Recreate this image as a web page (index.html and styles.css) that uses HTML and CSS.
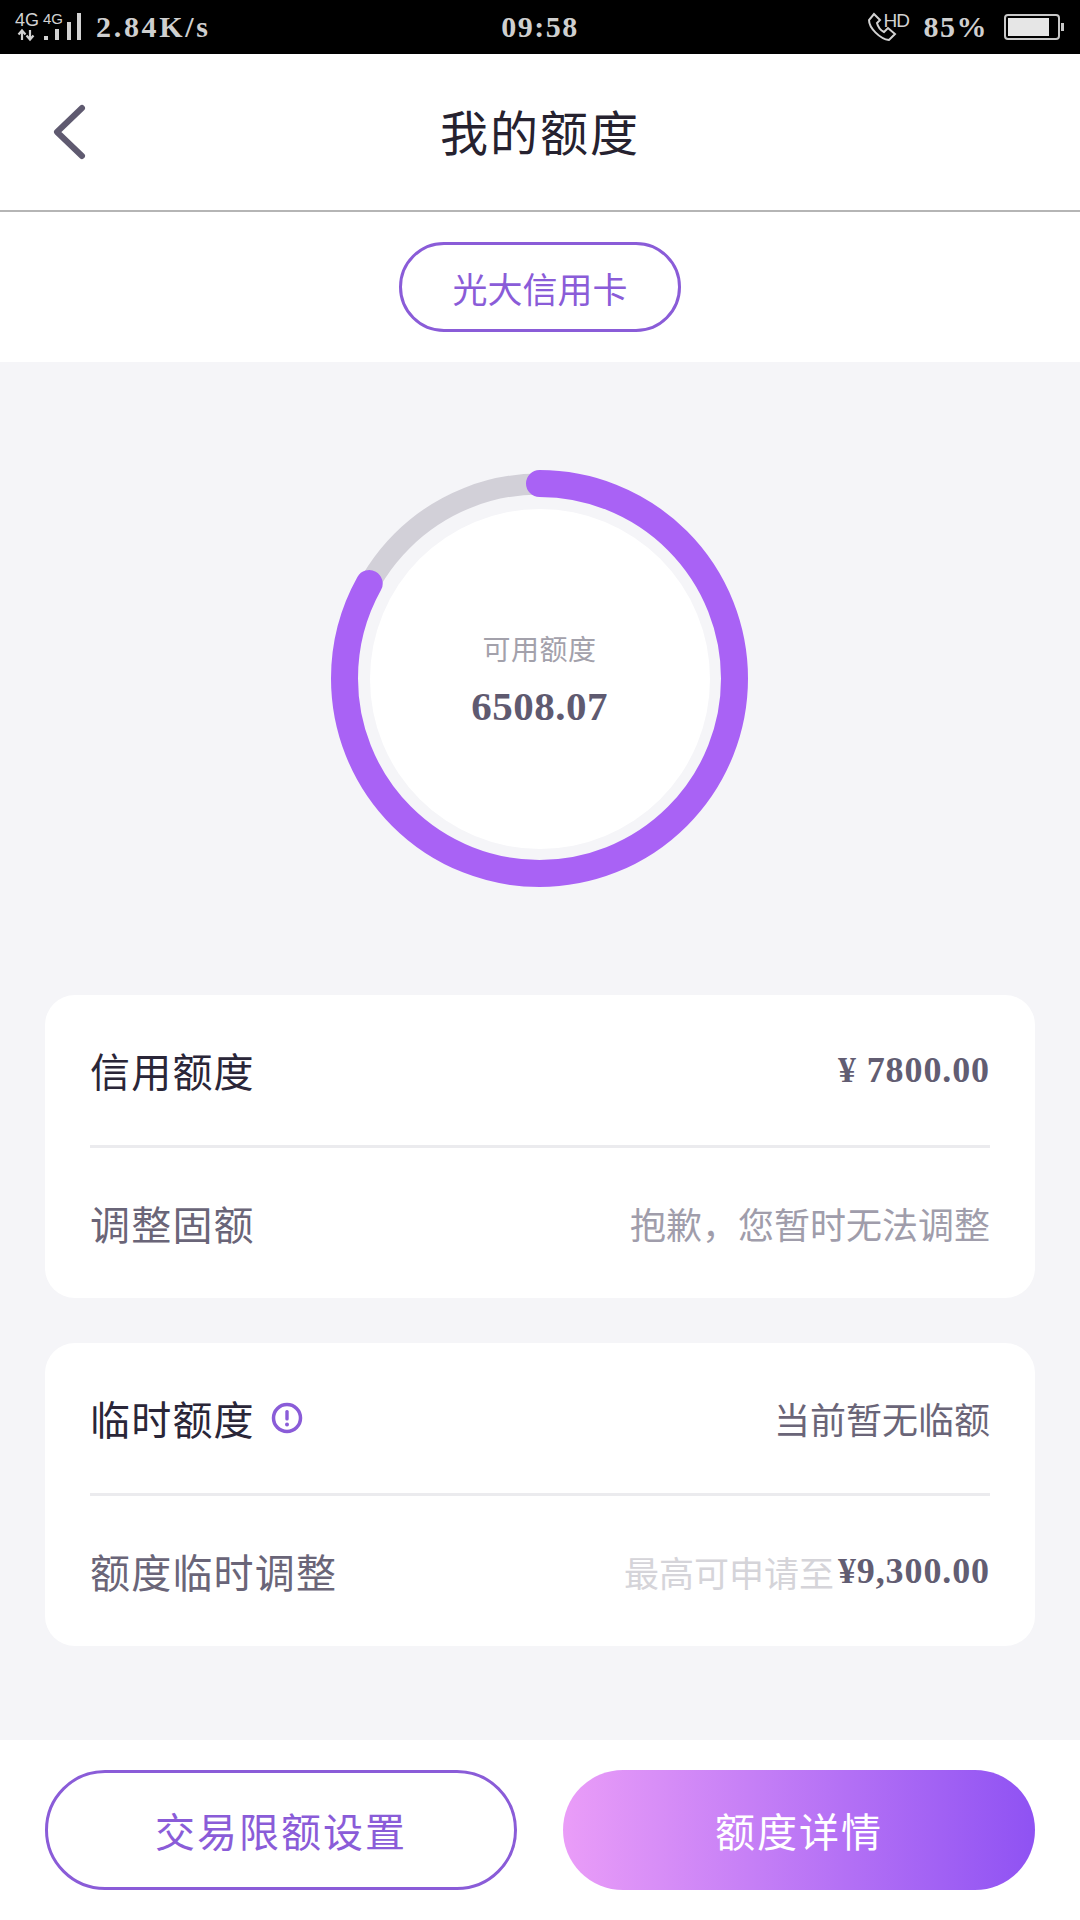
FILE: index.html
```html
<!DOCTYPE html>
<html lang="zh-CN">
<head>
    <meta charset="UTF-8">
    <meta name="viewport" content="width=device-width, initial-scale=1.0">
    <title>我的额度</title>
    <link rel="stylesheet" href="styles.css">
</head>
<body>
    <div class="status-bar">
        <div class="status-left">
            <div class="network">
                <span class="net-main">4G</span>
                <span class="net-second">4G</span>
                <svg class="net-icon" width="70" height="30" viewBox="0 0 70 30">
                    <!-- up and down arrows, then the signal bars -->
                    <path d="M6 27V18M2.5 21.5L6 17.500L9.500 21.500M14 17V26M10.500 22.500L14 26.500L17.500 22.500" fill="none" stroke="#d2d2d2" stroke-width="2.200"/>
                    <rect x="28" y="23" width="4" height="4" fill="#d2d2d2"/>
                    <rect x="39" y="16" width="4" height="11" fill="#d2d2d2"/>
                    <rect x="51" y="9" width="4" height="18" fill="#d2d2d2"/>
                    <rect x="61" y="0" width="4" height="27" fill="#d2d2d2"/>
                </svg>
            </div>
            <span class="speed">2.84K/s</span>
        </div>
        <div class="clock">09:58</div>
        <div class="status-right">
            <div class="call">
                <svg width="30" height="30" viewBox="0 0 30 30">
                    <path d="M7 2L2 8C2 16 13 27 22 28L28 22L21 16L17 20C13 18 11 15 10 11L13 8Z" fill="none" stroke="#d2d2d2" stroke-width="2"/>
                </svg>
                <span class="hd">HD</span>
            </div>
            <span class="percent">85%</span>
            <div class="battery">
                <div class="battery-level"></div>
            </div>
            <div class="battery-nub"></div>
        </div>
    </div>

    <header class="top-bar">
        <svg class="back" width="36" height="60" viewBox="0 0 36 60">
            <polyline points="31,6 6,30 31,54" fill="none" stroke="#5f5a70" stroke-width="6" stroke-linecap="round" stroke-linejoin="round"/>
        </svg>
        <h1>我的额度</h1>
    </header>

    <div class="card-switch">
        <div class="card-pill">光大信用卡</div>
    </div>

    <main class="content">
        <div class="ring">
            <svg class="ring-chart" width="417" height="417" viewBox="0 0 417 417">
                <circle cx="208.500" cy="208.500" r="194.500" fill="none" stroke="#d2d0d8" stroke-width="21"/>
                <circle cx="208.500" cy="208.500" r="195" fill="none" stroke="#a962f5" stroke-width="27" stroke-linecap="round"
                        pathLength="100" stroke-dasharray="83.100 100" transform="rotate(-90 208.500 208.500)"/>
            </svg>
            <div class="ring-center">
                <div class="ring-label">可用额度</div>
                <div class="ring-value">6508.07</div>
            </div>
        </div>

        <section class="panel">
            <div class="row">
                <span class="label">信用额度</span>
                <span class="amount">¥ 7800.00</span>
            </div>
            <div class="row">
                <span class="label label-soft">调整固额</span>
                <span class="note">抱歉，您暂时无法调整</span>
            </div>
        </section>

        <section class="panel">
            <div class="row">
                <span class="label label-tip">
                    临时额度
                    <svg width="32" height="32" viewBox="0 0 32 32">
                        <circle cx="16" cy="16" r="13.500" fill="none" stroke="#8a5cd8" stroke-width="3.500"/>
                        <rect x="14.300" y="8" width="3.400" height="10.500" rx="1.500" fill="#8a5cd8"/>
                        <circle cx="16" cy="22.500" r="2" fill="#8a5cd8"/>
                    </svg>
                </span>
                <span class="note note-dark">当前暂无临额</span>
            </div>
            <div class="row">
                <span class="label label-soft">额度临时调整</span>
                <span class="limit"><span class="limit-text">最高可申请至</span><span class="amount">¥9,300.00</span></span>
            </div>
        </section>
    </main>

    <footer class="actions">
        <div class="btn btn-outline">交易限额设置</div>
        <div class="btn btn-fill">额度详情</div>
    </footer>
</body>
</html>
```

FILE: styles.css
```css
body {
    margin: 0;
    width: 1080px;
    height: 1920px;
    overflow: hidden;
    background: #fff;
    font-family: "Noto Sans CJK SC", "Noto Sans", sans-serif;
}

/* status bar */
.status-bar {
    display: grid;
    grid-template-columns: 1fr auto 1fr;
    align-items: center;
    height: 54px;
    background: #000;
    color: #cfcfcf;
}

.status-left,
.status-right {
    display: flex;
    align-items: center;
}

.status-left {
    padding-left: 15px;
}

.status-right {
    justify-content: flex-end;
    padding-right: 16px;
}

.network {
    position: relative;
    width: 81px;
    height: 54px;
}

.net-main,
.net-second {
    position: absolute;
    font-family: "Liberation Sans", sans-serif;
    color: #d2d2d2;
}

.net-main {
    left: 0;
    top: 10px;
    font-size: 18px;
    line-height: 21px;
}

.net-second {
    left: 28px;
    top: 11px;
    font-size: 15px;
    line-height: 16px;
}

.net-icon {
    position: absolute;
    left: 1px;
    top: 13px;
}

.speed,
.clock,
.percent {
    font-family: "Liberation Serif", serif;
    font-weight: bold;
    font-size: 30px;
    line-height: 54px;
}

.speed {
    letter-spacing: 2.7px;
}

.clock {
    letter-spacing: 1.5px;
}

.percent {
    margin-left: 16px;
    letter-spacing: 1.5px;
}

.call {
    position: relative;
    width: 41px;
    height: 30px;
}

.hd {
    position: absolute;
    left: 17px;
    top: -2px;
    font-family: "Liberation Sans", sans-serif;
    font-size: 19px;
    line-height: 22px;
    letter-spacing: -1px;
    color: #d2d2d2;
}

.battery {
    box-sizing: border-box;
    width: 56px;
    height: 26px;
    margin-left: 16px;
    padding: 2px;
    border: 2px solid #c8c8c8;
    border-radius: 4px;
}

.battery-level {
    width: 85%;
    height: 100%;
    background: #e6e6e6;
}

.battery-nub {
    width: 3px;
    height: 8px;
    margin-left: 1px;
    background: #c8c8c8;
}

/* title bar */
.top-bar {
    position: relative;
    display: flex;
    align-items: center;
    justify-content: center;
    height: 156px;
    border-bottom: 2px solid #b5b5b5;
}

.back {
    position: absolute;
    left: 51px;
    top: 48px;
}

.top-bar h1 {
    margin: 0 0 4px;
    font-size: 48px;
    font-weight: normal;
    letter-spacing: 2px;
    color: #26222f;
}

.card-switch {
    display: flex;
    justify-content: center;
    padding: 30px 0;
}

.card-pill {
    box-sizing: border-box;
    display: flex;
    align-items: center;
    justify-content: center;
    width: 282px;
    height: 90px;
    border: 3px solid #8a5cd8;
    border-radius: 45px;
    font-size: 35px;
    color: #8a5cd8;
}

/* main area */
.content {
    height: 1378px;
    box-sizing: border-box;
    padding: 108px 45px 0;
    background: #f5f5f8;
}

.ring {
    display: grid;
    justify-items: center;
    align-items: center;
    margin-right: 1px;
    margin-bottom: 108px;
}

.ring-chart,
.ring-center {
    grid-area: 1 / 1;
}

.ring-center {
    display: flex;
    flex-direction: column;
    align-items: center;
    justify-content: center;
    width: 340px;
    height: 340px;
    border-radius: 50%;
    background: #fff;
}

.ring-label {
    font-size: 28px;
    line-height: 40px;
    letter-spacing: 0.5px;
    color: #a3a1ab;
}

.ring-value {
    font-family: "Liberation Serif", serif;
    font-weight: bold;
    font-size: 41px;
    line-height: 48px;
    margin-top: 14px;
    letter-spacing: 0.5px;
    color: #5f5a70;
}

.panel {
    padding: 0 45px;
    background: #fff;
    border-radius: 30px;
    margin-bottom: 45px;
}

.row {
    display: flex;
    align-items: center;
    justify-content: space-between;
    height: 150px;
}

.row + .row {
    border-top: 3px solid #ebebee;
}

.label {
    font-size: 40px;
    letter-spacing: 1.2px;
    color: #2a2638;
}

.label-soft {
    color: #6a6578;
}

.label-tip {
    display: flex;
    align-items: center;
    gap: 16px;
}

.amount {
    font-family: "Liberation Serif", serif;
    font-weight: bold;
    font-size: 36px;
    letter-spacing: 0.9px;
    color: #625d72;
}

.note {
    font-size: 36px;
    color: #a09dab;
}

.note-dark {
    color: #6a6578;
}

.limit {
    display: flex;
    align-items: center;
    gap: 4px;
}

.limit-text {
    font-size: 35px;
    color: #d5d4d9;
}

/* bottom buttons */
.actions {
    display: grid;
    grid-template-columns: 1fr 1fr;
    gap: 46px;
    padding: 30px 45px;
}

.btn {
    box-sizing: border-box;
    display: flex;
    align-items: center;
    justify-content: center;
    height: 120px;
    border-radius: 60px;
    font-size: 40px;
    letter-spacing: 2px;
}

.btn-outline {
    border: 3px solid #8a5cd8;
    color: #8a5cd8;
}

.btn-fill {
    background: linear-gradient(to right, #ea9df8, #8f52f3);
    color: #fff;
}
```
